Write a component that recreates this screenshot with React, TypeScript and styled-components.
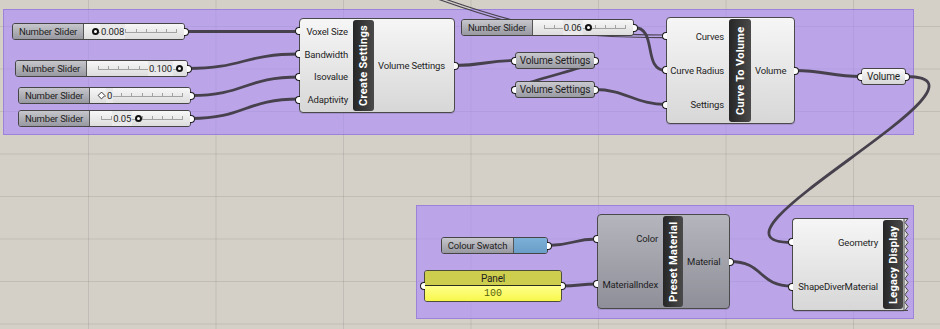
import * as React from 'react';
import styled, { createGlobalStyle } from 'styled-components';

const GlobalStyle = createGlobalStyle`
  html, body {
    margin: 0;
    padding: 0;
    background: #d4d0c8;
  }
  body {
    font-family: Roboto, "Liberation Sans", sans-serif;
  }
`;

const Canvas = styled.div`
  position: relative;
  width: 940px;
  height: 329px;
  overflow: hidden;
  background-color: #d4d0c8;
  background-image:
    linear-gradient(to right, rgba(0, 0, 0, 0.09) 1px, transparent 1px),
    linear-gradient(to bottom, rgba(0, 0, 0, 0.09) 1px, transparent 1px);
  background-size: 127.5px 42.5px;
  background-position: 88px 26px;
`;

interface BoxProps {
  $x: number;
  $y: number;
  $w: number;
  $h: number;
}

const Group = styled.div<BoxProps>`
  position: absolute;
  left: ${p => p.$x}px;
  top: ${p => p.$y}px;
  width: ${p => p.$w}px;
  height: ${p => p.$h}px;
  box-sizing: border-box;
  background: rgba(170, 135, 255, 0.59);
  border: 1px solid rgba(120, 90, 200, 0.45);
`;

const Wires = styled.svg`
  position: absolute;
  left: 0;
  top: 0;
  overflow: visible;
`;

const Node = styled.div<BoxProps>`
  position: absolute;
  left: ${p => p.$x}px;
  top: ${p => p.$y}px;
  width: ${p => p.$w}px;
  height: ${p => p.$h}px;
  box-sizing: border-box;
  font-size: 9.5px;
  letter-spacing: -0.15px;
  color: #1e1e1e;
  white-space: nowrap;
`;

const Port = styled.span<{ $side: 'in' | 'out' }>`
  position: absolute;
  top: 50%;
  ${p => (p.$side === 'in' ? 'left: -5px;' : 'right: -5px;')}
  width: 5px;
  height: 8px;
  margin-top: -4px;
  box-sizing: border-box;
  background: #fff;
  border: 1.5px solid #1b1b1b;
  ${p =>
    p.$side === 'in'
      ? 'border-right: none; border-radius: 4px 0 0 4px;'
      : 'border-left: none; border-radius: 0 4px 4px 0;'}
`;

/* ---------- components ---------- */

const CompBox = styled(Node)<{ $dark?: boolean; $zig?: boolean }>`
  display: flex;
  padding: 1px 0;
  border: 1px solid #4a4a4a;
  border-radius: 4px;
  ${p => (p.$zig ? 'border-right: none; border-radius: 4px 0 0 4px;' : '')}
  background: ${p =>
    p.$dark
      ? 'linear-gradient(#b5b5bd, #8f8f99)'
      : 'linear-gradient(#f6f6f6, #d7d7d7)'};
  box-shadow: 0 1px 0 rgba(0, 0, 0, 0.12);
`;

const Column = styled.div<{ $w?: number }>`
  display: flex;
  flex-direction: column;
  ${p => (p.$w ? `width: ${p.$w}px;` : 'flex: 1;')}
`;

const Row = styled.div<{ $side: 'in' | 'out' }>`
  position: relative;
  flex: 1;
  display: flex;
  align-items: center;
  justify-content: ${p => (p.$side === 'in' ? 'flex-end' : 'flex-start')};
  padding: ${p => (p.$side === 'in' ? '0 5px 0 0' : '0 0 0 4px')};
`;

const Title = styled.div<{ $w: number }>`
  width: ${p => p.$w}px;
  display: flex;
  align-items: center;
  justify-content: center;
  background: linear-gradient(to right, #4a4a4a, #262626);
  border-radius: 3px;
  color: #fff;
  font-size: 11px;
  font-weight: bold;
  letter-spacing: 0.3px;
  writing-mode: vertical-rl;
  transform: rotate(180deg);
`;

const Zig = styled.svg`
  position: absolute;
  left: 100%;
  top: -1px;
  overflow: visible;
`;

interface CompProps {
  x: number;
  y: number;
  w: number;
  h: number;
  inW: number;
  titleW: number;
  title: string;
  inputs: string[];
  output?: string;
  dark?: boolean;
  zig?: boolean;
}

const Component = ({ x, y, w, h, inW, titleW, title, inputs, output, dark, zig }: CompProps) => {
  const teeth: string[] = [];
  if (zig) {
    teeth.push('0,0.5');
    for (let yy = 0; yy <= h - 1; yy += 4) {
      teeth.push(`${yy % 8 === 0 ? 4 : 1},${yy + 0.5}`);
    }
    teeth.push(`4,${h - 0.5}`, `0,${h - 0.5}`);
  }
  return (
    <CompBox $x={x} $y={y} $w={w} $h={h} $dark={dark} $zig={zig}>
      <Column $w={inW}>
        {inputs.map(label => (
          <Row key={label} $side="in">
            <Port $side="in" />
            {label}
          </Row>
        ))}
      </Column>
      <Title $w={titleW}>{title}</Title>
      {output && (
        <Column>
          <Row $side="out">
            {output}
            <Port $side="out" />
          </Row>
        </Column>
      )}
      {zig && (
        <Zig width={5} height={h}>
          <polygon points={teeth.join(' ')} fill="#dcdcdc" stroke="#4a4a4a" strokeWidth={1} />
        </Zig>
      )}
    </CompBox>
  );
};

/* ---------- parameters ---------- */

const ParamBox = styled(Node)<{ $light?: boolean }>`
  display: flex;
  align-items: center;
  justify-content: center;
  border: 1px solid #454545;
  border-radius: 3px;
  background: ${p =>
    p.$light ? 'linear-gradient(#fafafa, #d6d6d6)' : 'linear-gradient(#c9c9cf, #9a9aa3)'};
  font-size: 10px;
`;

const Param = ({ x, y, w, label, light }: { x: number; y: number; w: number; label: string; light?: boolean }) => (
  <ParamBox $x={x} $y={y} $w={w} $h={17} $light={light}>
    <Port $side="in" />
    {label}
    <Port $side="out" />
  </ParamBox>
);

/* ---------- sliders ---------- */

const SliderBox = styled(Node)`
  display: flex;
  border: 1px solid #454545;
  border-radius: 3px;
`;

const GreyLabel = styled.div<{ $w: number }>`
  width: ${p => p.$w}px;
  display: flex;
  align-items: center;
  justify-content: center;
  background: linear-gradient(#c6c6cc, #9898a1);
  border-right: 1px solid #555;
  border-radius: 2px 0 0 2px;
`;

const Track = styled.div`
  position: relative;
  flex: 1;
  background: linear-gradient(#f7f7f7, #dddddd);
  border-radius: 0 2px 2px 0;
`;

const Rail = styled.svg`
  position: absolute;
  left: 0;
  top: 0;
`;

const Grip = styled.span<{ $diamond?: boolean }>`
  position: absolute;
  top: 4px;
  width: 7px;
  height: 7px;
  margin-left: -3.5px;
  box-sizing: border-box;
  background: #fff;
  border: ${p => (p.$diamond ? '1.5px' : '2px')} solid #111;
  border-radius: ${p => (p.$diamond ? '0' : '50%')};
  transform: ${p => (p.$diamond ? 'rotate(45deg) scale(0.8)' : 'none')};
`;

const Value = styled.span`
  position: absolute;
  top: 0;
  line-height: 15px;
  padding: 0 1px;
  background: #e9e9e9;
`;

interface SliderProps {
  x: number;
  y: number;
  labelW: number;
  value: string;
  f: number;
  side: 'left' | 'right';
  diamond?: boolean;
}

const SLIDER_W = 173;

const Slider = ({ x, y, labelW, value, f, side, diamond }: SliderProps) => {
  const trackW = SLIDER_W - 3 - labelW;
  const r0 = 11;
  const r1 = trackW - 8;
  const gx = r0 + f * (r1 - r0);
  const ticks = Array.from({ length: 9 }, (_, i) => r0 + (i * (r1 - r0)) / 8);
  return (
    <SliderBox $x={x} $y={y} $w={SLIDER_W} $h={17}>
      <GreyLabel $w={labelW}>Number Slider</GreyLabel>
      <Track>
        <Rail width={trackW} height={15}>
          <line x1={r0} y1={8.5} x2={r1} y2={8.5} stroke="#a2a2a2" strokeWidth={1} />
          {ticks.map(t => (
            <line key={t} x1={Math.round(t) + 0.5} y1={5} x2={Math.round(t) + 0.5} y2={9} stroke="#a2a2a2" strokeWidth={1} />
          ))}
        </Rail>
        <Value style={side === 'right' ? { left: gx + 5 } : { right: trackW - gx + 6 }}>{value}</Value>
        <Grip $diamond={diamond} style={{ left: gx }} />
      </Track>
      <Port $side="out" />
    </SliderBox>
  );
};

/* ---------- swatch & panel ---------- */

const Swatch = styled.div`
  flex: 1;
  background: linear-gradient(#7cb0d8, #6a9ec8);
  border-radius: 0 2px 2px 0;
`;

const PanelBox = styled(Node)`
  display: flex;
  flex-direction: column;
  border: 1px solid #4d4d3a;
  border-radius: 3px;
`;

const PanelHead = styled.div`
  height: 14px;
  display: flex;
  align-items: center;
  justify-content: center;
  background: #cdcd4e;
  border-bottom: 1px solid #2e2e20;
  border-radius: 2px 2px 0 0;
  font-size: 10px;
`;

const PanelBody = styled.div`
  position: relative;
  flex: 1;
  display: flex;
  align-items: center;
  justify-content: center;
  background: linear-gradient(#ffff8a, #f7f74c);
  border-radius: 0 0 2px 2px;
  font-family: "Liberation Mono", monospace;
  font-size: 10px;
  letter-spacing: 0;
  color: #56650a;
`;

/* ---------- wires ---------- */

const wire = (x1: number, y1: number, x2: number, y2: number, k?: number) => {
  const c = k ?? Math.max(Math.abs(x2 - x1) * 0.5, 12);
  return `M ${x1} ${y1} C ${x1 + c} ${y1}, ${x2 - c} ${y2}, ${x2} ${y2}`;
};

const WIRES: string[] = [
  wire(185, 31.5, 299, 31.5),
  wire(188, 68.5, 299, 54),
  wire(191, 95.5, 299, 77),
  wire(191, 118.5, 299, 99),
  wire(455, 65.5, 515, 60.5, 28),
  wire(595, 60.5, 515, 89.5, 22),
  wire(595, 89.5, 666, 104.5, 30),
  wire(634, 27.5, 666, 70.5, 24),
  wire(795, 70.5, 861, 76.5, 30),
  wire(906, 76.5, 792, 242.5, 112),
  wire(548, 245.5, 597, 239),
  wire(562, 286, 597, 284),
  wire(730, 261.5, 792, 286, 34),
];

const DOUBLE = 'M 420 -10 C 520 27, 560 35, 666 35';

export default function App() {
  return (
    <>
      <GlobalStyle />
      <Canvas>
        <Group $x={3} $y={9} $w={911} $h={126} />
        <Group $x={416} $y={205} $w={498} $h={114} />

        <Wires width={940} height={329}>
          <g fill="none" stroke="#46414d" strokeWidth={2.8} strokeLinecap="round">
            {WIRES.map(d => (
              <path key={d} d={d} />
            ))}
          </g>
          <g fill="none" stroke="#46414d" strokeWidth={1.1}>
            <path d={DOUBLE} />
            <path d={DOUBLE} transform="translate(0 2.6)" />
          </g>
        </Wires>

        <Slider x={12} y={23} labelW={70} value="0.008" f={0} side="right" />
        <Slider x={15} y={60} labelW={70} value="0.100" f={1} side="left" />
        <Slider x={18} y={87} labelW={70} value="0" f={0} side="right" diamond />
        <Slider x={18} y={110} labelW={70} value="0.05" f={0.46} side="left" />
        <Slider x={461} y={19} labelW={70} value="0.06" f={0.55} side="left" />

        <Component
          x={299}
          y={18}
          w={156}
          h={95}
          inW={53}
          titleW={21}
          title="Create Settings"
          inputs={['Voxel Size', 'Bandwidth', 'Isovalue', 'Adaptivity']}
          output="Volume Settings"
        />

        <Param x={515} y={52} w={80} label="Volume Settings" />
        <Param x={515} y={81} w={80} label="Volume Settings" />

        <Component
          x={666}
          y={17}
          w={129}
          h={107}
          inW={62}
          titleW={22}
          title="Curve To Volume"
          inputs={['Curves', 'Curve Radius', 'Settings']}
          output="Volume"
        />

        <Param x={861} y={68} w={45} label="Volume" light />

        <SliderBox $x={441} $y={237} $w={107} $h={17}>
          <GreyLabel $w={71}>Colour Swatch</GreyLabel>
          <Swatch />
          <Port $side="out" />
        </SliderBox>

        <PanelBox $x={424} $y={270} $w={138} $h={32}>
          <Port $side="in" />
          <PanelHead>Panel</PanelHead>
          <PanelBody>100</PanelBody>
          <Port $side="out" />
        </PanelBox>

        <Component
          x={597}
          y={214}
          w={133}
          h={95}
          inW={65}
          titleW={20}
          title="Preset Material"
          inputs={['Color', 'MaterialIndex']}
          output="Material"
          dark
        />

        <Component
          x={792}
          y={218}
          w={112}
          h={93}
          inW={90}
          titleW={20}
          title="Legacy Display"
          inputs={['Geometry', 'ShapeDiverMaterial']}
          zig
        />
      </Canvas>
    </>
  );
}
